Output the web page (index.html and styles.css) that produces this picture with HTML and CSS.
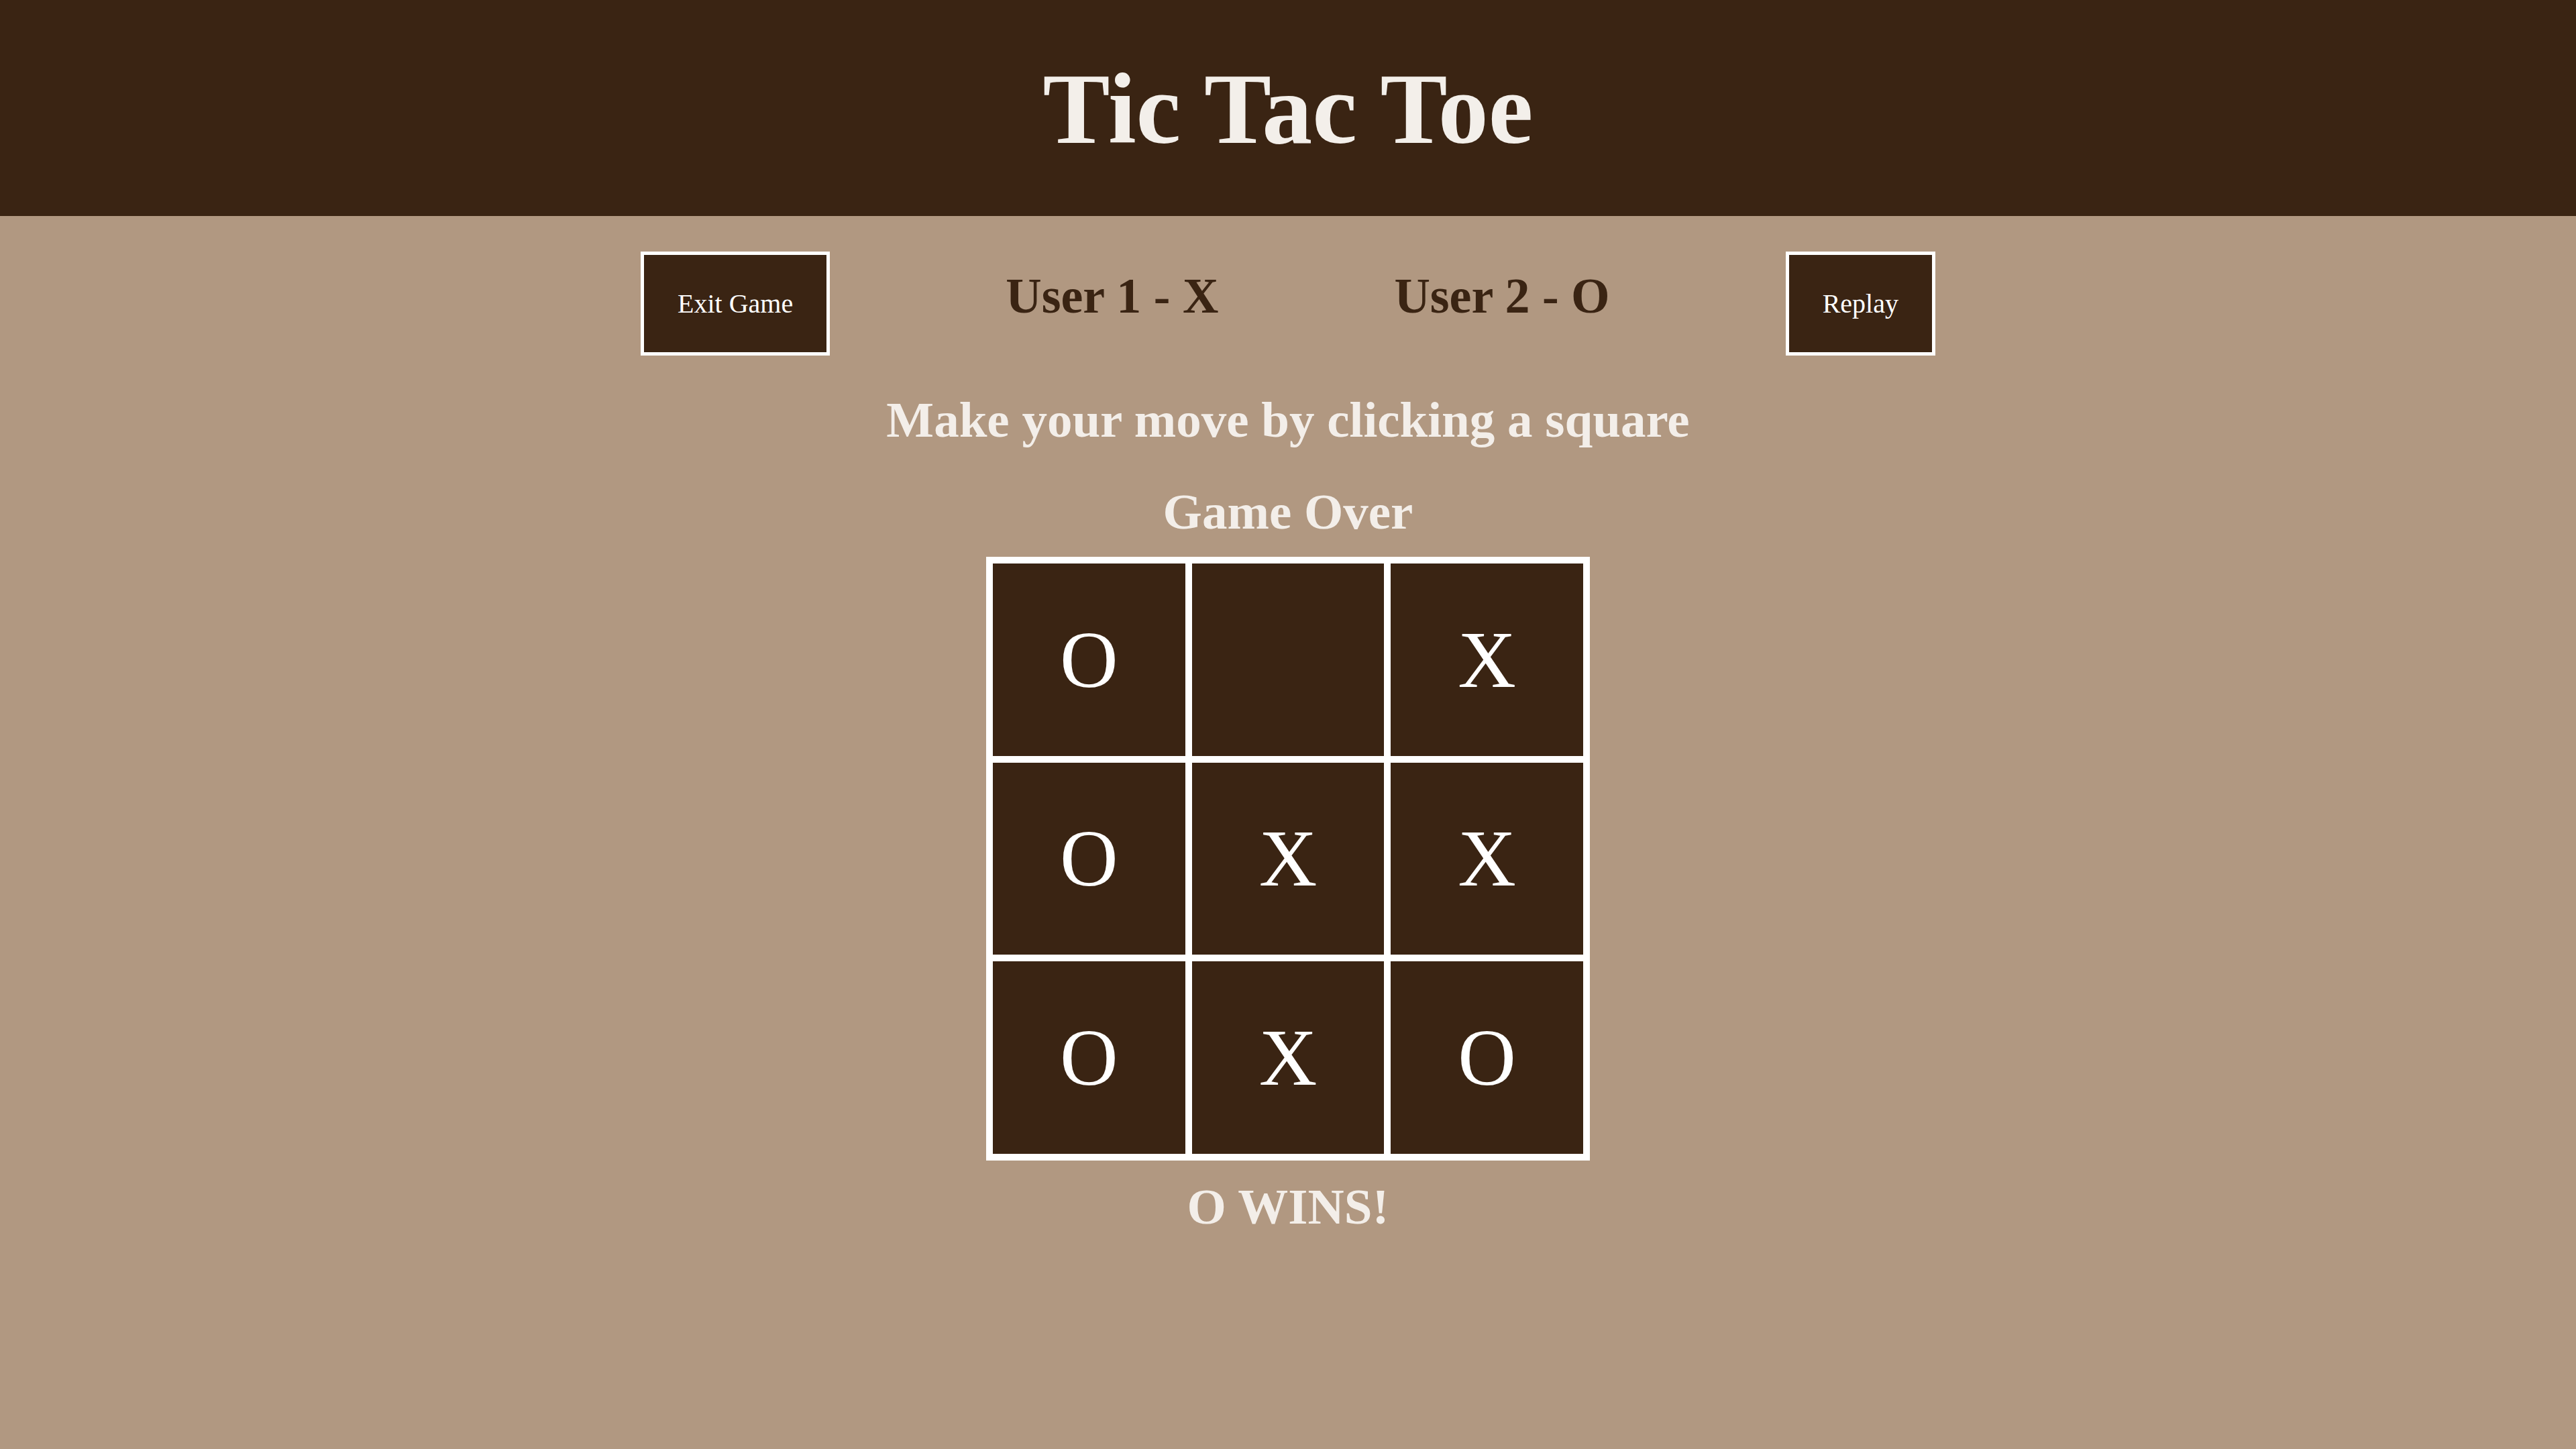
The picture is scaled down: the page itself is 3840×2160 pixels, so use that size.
FILE: index.html
```html
<!DOCTYPE html>
<html lang="en">
<head>
<meta charset="utf-8">
<title>Tic Tac Toe</title>
<link rel="stylesheet" href="styles.css">
</head>
<body>
<header class="top">
  <h1 class="title">Tic Tac Toe</h1>
</header>
<main class="game">
  <div class="controls">
    <button class="btn">Exit Game</button>
    <h2 class="player">User 1 - X</h2>
    <h2 class="player">User 2 - O</h2>
    <button class="btn">Replay</button>
  </div>
  <h2 class="message">Make your move by clicking a square</h2>
  <h2 class="message status">Game Over</h2>
  <div class="board">
    <div class="cell">O</div>
    <div class="cell"></div>
    <div class="cell">X</div>
    <div class="cell">O</div>
    <div class="cell">X</div>
    <div class="cell">X</div>
    <div class="cell">O</div>
    <div class="cell">X</div>
    <div class="cell">O</div>
  </div>
  <h2 class="message result">O WINS!</h2>
</main>
</body>
</html>
```
FILE: styles.css
```css
html {
  background: #b19881;
}
body {
  margin: 0;
  min-height: 2160px;
  background: #b19881;
  font-family: "Liberation Serif", "Times New Roman", serif;
}
.top {
  background: #3a2413;
  padding: 79px 0 77px;
  text-align: center;
}
.title {
  margin: 0;
  font-size: 150px;
  font-weight: bold;
  line-height: 166px;
  color: #f3efea;
}
.game {
  display: flex;
  flex-direction: column;
  align-items: center;
}
.controls {
  display: flex;
  align-items: baseline;
  gap: 262px;
  margin-top: 53px;
}
.btn {
  font-family: "Liberation Serif", "Times New Roman", serif;
  font-size: 40px;
  line-height: 45px;
  color: #ffffff;
  background: #3a2413;
  border: 5px solid #ffffff;
  padding: 50px;
  margin: 0;
  cursor: pointer;
}
.player {
  margin: 0;
  font-size: 74px;
  font-weight: bold;
  line-height: 82px;
  color: #3a2413;
}
.message {
  margin: 54px 0 0;
  font-size: 75px;
  font-weight: bold;
  line-height: 83px;
  color: #f3eee9;
}
.status {
  margin-top: 54px;
}
.board {
  margin-top: 26px;
  width: 900px;
  height: 900px;
  box-sizing: border-box;
  background: #ffffff;
  padding: 10px;
  display: grid;
  grid-template-columns: repeat(3, 1fr);
  grid-template-rows: repeat(3, 1fr);
  gap: 10px;
}
.cell {
  background: #3a2413;
  color: #ffffff;
  font-size: 120px;
  line-height: 133px;
  display: flex;
  align-items: center;
  justify-content: center;
}
.result {
  margin-top: 27px;
}
```
